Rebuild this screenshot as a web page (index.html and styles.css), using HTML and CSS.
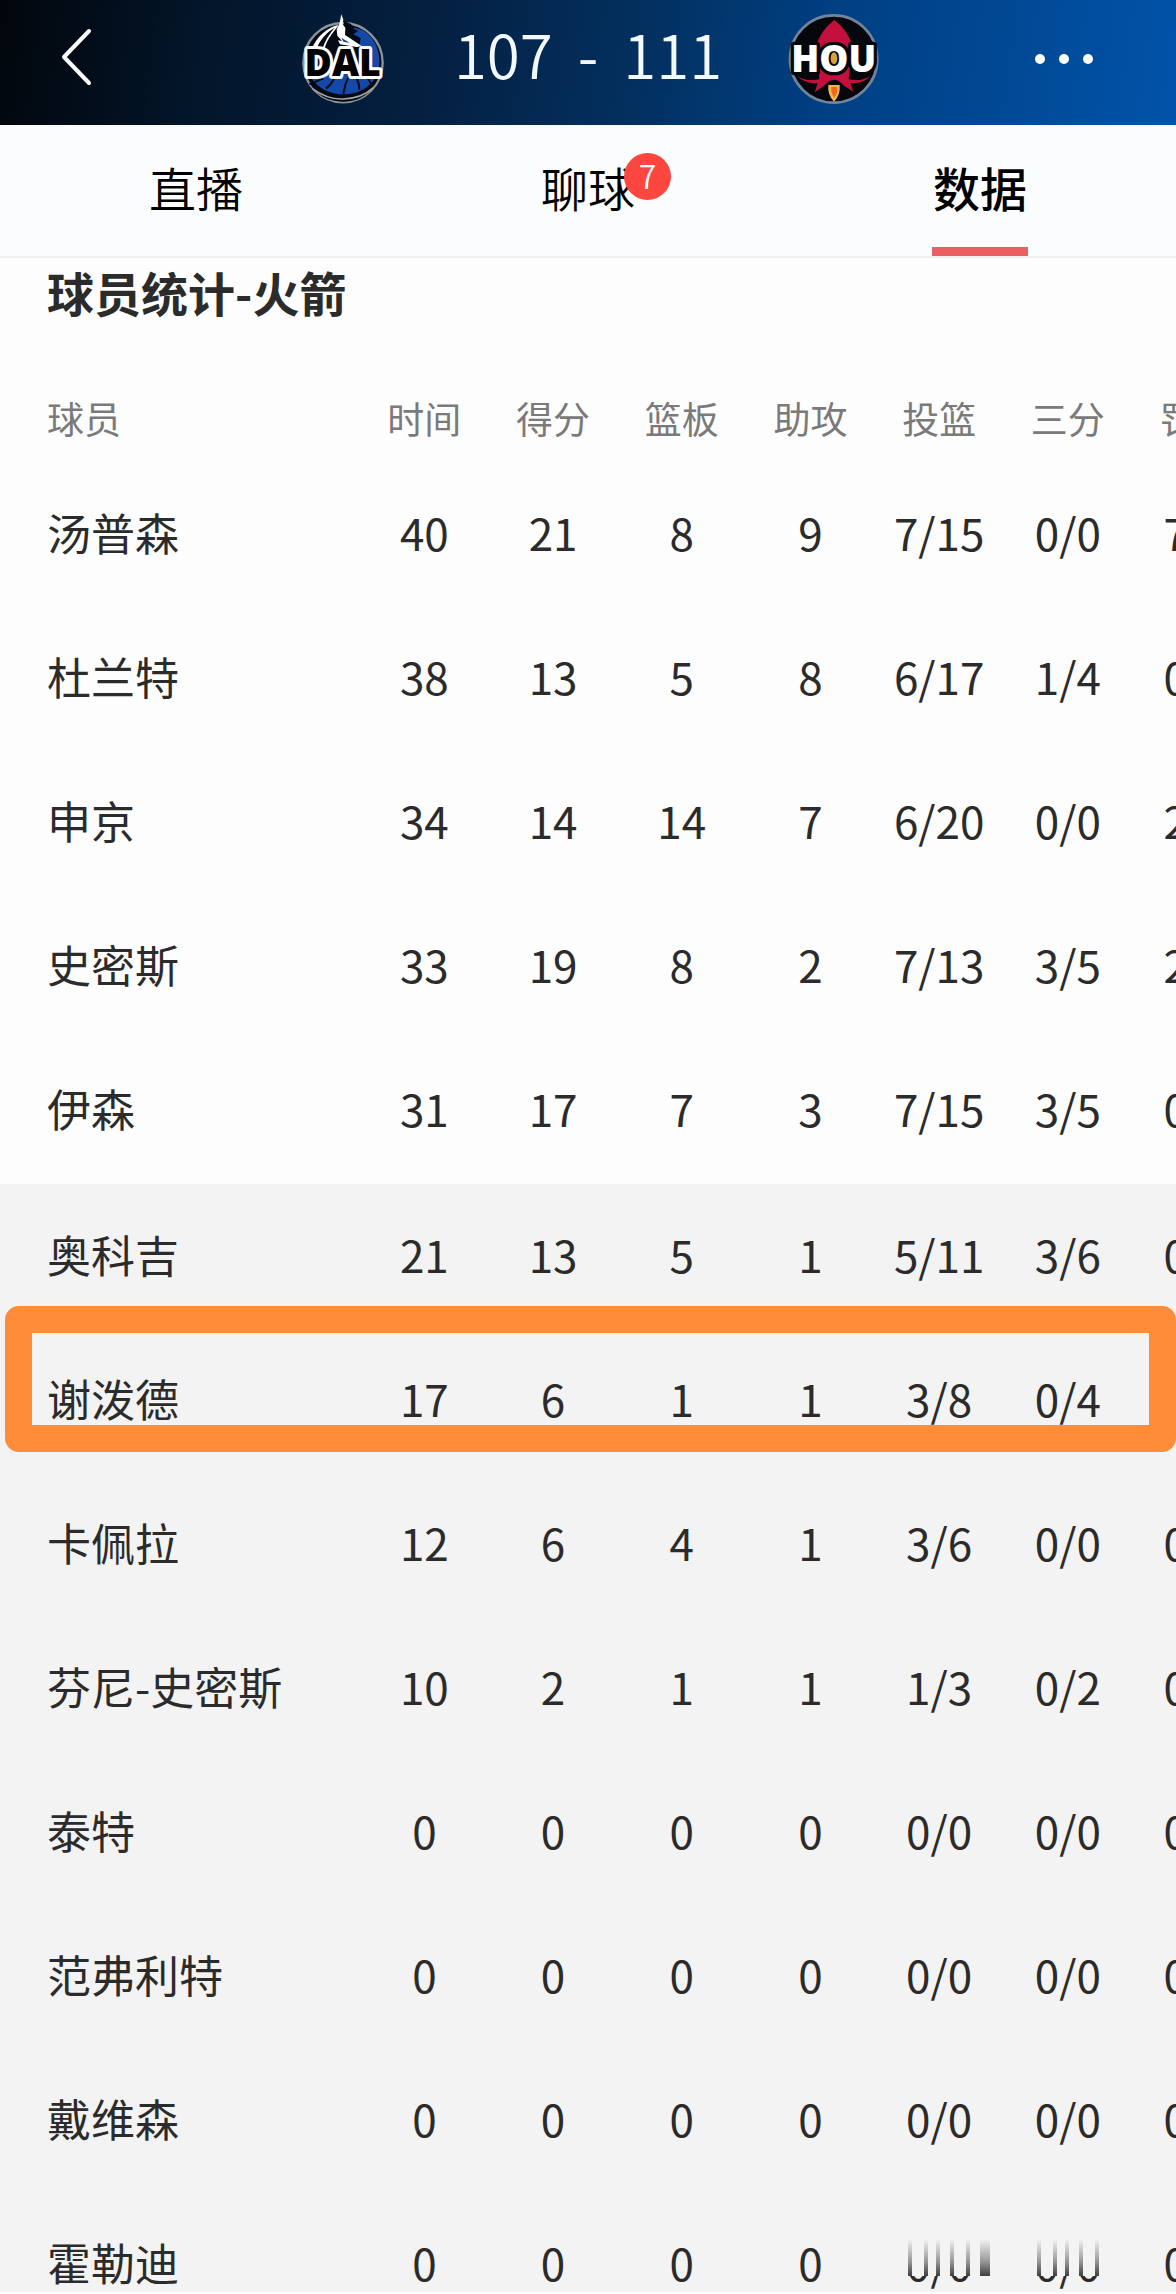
FILE: index.html
```html
<!DOCTYPE html>
<html lang="zh-CN">
<head>
  <meta charset="utf-8">
  <meta name="viewport" content="width=device-width, initial-scale=1">
  <title>球员统计</title>
  <link rel="stylesheet" href="styles.css">
</head>
<body>
  <header class="topbar">
    <button class="icon-btn back" type="button" aria-label="返回">
      <svg width="33" height="60" viewBox="0 0 33 60" fill="none" stroke="#fff" stroke-width="4" stroke-linecap="round" stroke-linejoin="round"><path d="M29 4 L4 30 L29 56"/></svg>
    </button>
    <div class="match">
      <svg class="logo" viewBox="0 0 330 330" role="img" aria-label="DAL">
        <circle cx="159" cy="173" r="119" fill="#050a14" stroke="#8b9299" stroke-width="7"/>
        <path d="M160 70 C225 55 270 110 268 170 C268 225 225 268 158 268 C110 268 72 240 58 208 L215 208 L215 125 Z" fill="#1449a8"/>
        <path d="M66 130 C80 96 112 66 146 60 C128 84 112 102 104 130 Z" fill="#fff"/>
        <path d="M82 126 C92 102 112 80 134 68 C116 90 104 108 98 130 Z" fill="#050a14"/>
        <path d="M118 126 C124 98 132 82 145 72 C138 94 142 116 162 128 Z" fill="#050a14"/>
        <path d="M160 48 C175 52 190 58 192 72 L204 78 L190 88 L212 100 L208 122 L170 92 Z" fill="#050a14"/>
        <path d="M154 28 L160 44 L158 58 L166 68 L165 90 L180 100 L216 124 L200 126 L150 118 L144 106 L156 108 L142 92 L140 72 L148 58 Z" fill="#fff"/>
        <path d="M154 98 L180 114 L160 110 Z" fill="#1449a8"/>
        <path d="M58 238 L100 220 M108 250 Q126 238 134 214 M160 266 Q164 238 176 214 M208 254 Q208 234 196 212 M244 238 Q238 224 226 212" fill="none" stroke="#050a14" stroke-width="6"/>
        <path d="M58 232 Q108 282 168 276 Q232 270 260 226 Q232 290 160 290 Q88 290 58 232 Z" fill="#050a14"/>
        <path d="M66 250 Q112 284 160 282 Q216 280 250 248" fill="none" stroke="#a5a49f" stroke-width="5"/>
        <text class="dal-text" x="158" y="213" text-anchor="middle">DAL</text>
      </svg>
      <div class="score">
        <span>107</span>
        <span>-</span>
        <span>111</span>
      </div>
      <svg class="logo" viewBox="0 0 330 330" role="img" aria-label="HOU">
        <circle cx="173" cy="162" r="131" fill="#06070c" stroke="#73839a" stroke-width="8"/>
        <path d="M175 45 Q216 76 230 124 L218 220 L232 260 L204 242 Q175 206 144 242 L116 262 L130 220 L120 124 Q134 76 175 45 Z" fill="#c4103c"/>
        <path d="M62 212 Q90 232 134 222 L128 234 Q88 238 62 212 Z M284 212 Q256 232 214 222 L220 234 Q262 238 284 212 Z" fill="#c4103c"/>
        <path d="M152 238 Q174 218 196 238 L190 242 L158 242 Z" fill="#06070c"/>
        <path d="M157 240 L191 240 Q194 270 174 290 Q154 270 157 240 Z" fill="#f3b64d"/>
        <path d="M166 246 L183 246 Q186 264 175 278 Q164 264 166 246 Z" fill="#ee681d"/>
        <text class="hou-text" x="173" y="200" text-anchor="middle">HOU</text>
        <ellipse cx="174" cy="160" rx="10" ry="18" fill="#d9a13c"/>
      </svg>
    </div>
    <button class="icon-btn more" type="button" aria-label="更多">
      <svg width="60" height="12" viewBox="0 0 60 12" fill="#fff"><circle cx="6" cy="6" r="5"/><circle cx="30" cy="6" r="5"/><circle cx="54" cy="6" r="5"/></svg>
    </button>
  </header>

  <nav class="tabs">
    <a href="#live">直播</a>
    <a href="#chat"><span class="tab-label">聊球<span class="badge">7</span></span></a>
    <a href="#stats" class="active">数据</a>
  </nav>

  <main class="stats" id="stats">
    <h1>球员统计-火箭</h1>
    <table>
      <thead>
        <tr><th class="name" scope="col">球员</th><th scope="col">时间</th><th scope="col">得分</th><th scope="col">篮板</th><th scope="col">助攻</th><th scope="col">投篮</th><th scope="col">三分</th><th scope="col">罚球</th></tr>
      </thead>
      <tbody class="starters">
        <tr><th class="name" scope="row">汤普森</th><td>40</td><td>21</td><td>8</td><td>9</td><td>7/15</td><td>0/0</td><td>7/8</td></tr>
        <tr><th class="name" scope="row">杜兰特</th><td>38</td><td>13</td><td>5</td><td>8</td><td>6/17</td><td>1/4</td><td>0/0</td></tr>
        <tr><th class="name" scope="row">申京</th><td>34</td><td>14</td><td>14</td><td>7</td><td>6/20</td><td>0/0</td><td>2/2</td></tr>
        <tr><th class="name" scope="row">史密斯</th><td>33</td><td>19</td><td>8</td><td>2</td><td>7/13</td><td>3/5</td><td>2/2</td></tr>
        <tr><th class="name" scope="row">伊森</th><td>31</td><td>17</td><td>7</td><td>3</td><td>7/15</td><td>3/5</td><td>0/0</td></tr>
      </tbody>
      <tbody class="bench">
        <tr><th class="name" scope="row">奥科吉</th><td>21</td><td>13</td><td>5</td><td>1</td><td>5/11</td><td>3/6</td><td>0/0</td></tr>
        <tr><th class="name" scope="row">谢泼德<span class="marker"></span></th><td>17</td><td>6</td><td>1</td><td>1</td><td>3/8</td><td>0/4</td><td></td></tr>
        <tr><th class="name" scope="row">卡佩拉</th><td>12</td><td>6</td><td>4</td><td>1</td><td>3/6</td><td>0/0</td><td>0/0</td></tr>
        <tr><th class="name" scope="row">芬尼-史密斯</th><td>10</td><td>2</td><td>1</td><td>1</td><td>1/3</td><td>0/2</td><td>0/0</td></tr>
        <tr><th class="name" scope="row">泰特</th><td>0</td><td>0</td><td>0</td><td>0</td><td>0/0</td><td>0/0</td><td>0/0</td></tr>
        <tr><th class="name" scope="row">范弗利特</th><td>0</td><td>0</td><td>0</td><td>0</td><td>0/0</td><td>0/0</td><td>0/0</td></tr>
        <tr><th class="name" scope="row">戴维森</th><td>0</td><td>0</td><td>0</td><td>0</td><td>0/0</td><td>0/0</td><td>0/0</td></tr>
        <tr>
          <th class="name" scope="row">霍勒迪</th><td>0</td><td>0</td><td>0</td><td>0</td>
          <td class="faded">0/0
            <svg class="smear" width="258" height="37" viewBox="0 0 258 37" aria-hidden="true">
              <defs>
                <linearGradient id="streak" x1="0" y1="0" x2="0" y2="1"><stop offset="0" stop-color="#2b2b2b" stop-opacity="0"/><stop offset="0.6" stop-color="#2b2b2b" stop-opacity="0.45"/><stop offset="1" stop-color="#2b2b2b" stop-opacity="0.9"/></linearGradient>
              </defs>
              <rect width="258" height="37" fill="#f3f3f3"/>
              <g fill="url(#streak)">
                <rect x="33" y="0" width="4" height="37"/><rect x="49" y="0" width="4" height="37"/>
                <rect x="61" y="0" width="4" height="37"/>
                <rect x="75" y="0" width="4" height="37"/><rect x="91" y="0" width="4" height="37"/>
                <rect x="105" y="0" width="10" height="37"/>
                <rect x="162" y="0" width="4" height="37"/><rect x="178" y="0" width="4" height="37"/>
                <rect x="190" y="0" width="4" height="37"/>
                <rect x="204" y="0" width="4" height="37"/><rect x="220" y="0" width="4" height="37"/>
              </g>
            </svg>
          </td>
          <td>0/0</td><td>0/0</td>
        </tr>
      </tbody>
    </table>
  </main>
</body>
</html>
```
FILE: styles.css
```css
* {
  box-sizing: border-box;
}
body {
  display: flex;
  flex-direction: column;
  height: 100vh;
  margin: 0;
  padding-bottom: 2px;
  overflow: hidden;
  background-color: #fdfdfd;
  color: #2b2b2b;
  font-family: "Noto Sans CJK SC", sans-serif;
}

/* top bar */
.topbar {
  display: grid;
  grid-template-columns: 1fr auto 1fr;
  align-items: center;
  flex: none;
  height: 125px;
  padding: 0 60px;
  background: linear-gradient(98deg, #02060c 0%, #03162b 18%, #041f40 36%, #03305f 54%, #003f82 70%, #014893 84%, #0153aa 100%);
}
.icon-btn {
  display: flex;
  padding: 0;
  border: 0;
  background: none;
  cursor: pointer;
}
.back {
  justify-self: start;
  padding-bottom: 12px;
}
.more {
  justify-self: end;
  padding: 0 22px 8px 0;
}
.match {
  display: flex;
  align-items: center;
  gap: 54px;
  padding-bottom: 6px;
}
.logo {
  display: block;
  width: 110px;
  height: 110px;
}
.score {
  display: flex;
  gap: 25px;
  padding-bottom: 14px;
  color: #f4f9ff;
  font-size: 60px;
  font-weight: 350;
  line-height: 80px;
}
.dal-text,
.hou-text {
  font-family: "Open Sans", sans-serif;
  font-weight: 800;
  paint-order: stroke;
  stroke-linejoin: round;
}
.dal-text {
  font-size: 112px;
  fill: #000;
  stroke: #fff;
  stroke-width: 18px;
}
.hou-text {
  font-size: 110px;
  fill: #fff;
  stroke: #06070c;
  stroke-width: 20px;
}

/* tabs */
.tabs {
  display: flex;
  flex: none;
  height: 133px;
  border-bottom: 2px solid #f0f0f1;
  background-color: #fbfcfd;
}
.tabs a {
  display: flex;
  flex: 1;
  justify-content: center;
  color: #000;
  font-size: 47px;
  font-weight: 350;
  line-height: 124px;
  text-decoration: none;
}
.tabs .active {
  position: relative;
  font-weight: 500;
}
.tabs .active::after {
  content: "";
  position: absolute;
  bottom: 0;
  width: 96px;
  height: 9px;
  background-color: #ea5f61;
}
.tab-label {
  position: relative;
}
.badge {
  position: absolute;
  top: 28px;
  right: -36px;
  width: 47px;
  height: 47px;
  border-radius: 50%;
  background-color: #fc463f;
  color: #fff;
  font-size: 32px;
  line-height: 44px;
  text-align: center;
}

/* player table */
.stats {
  flex: 1;
  min-height: 0;
  overflow: hidden;
}
.stats h1 {
  margin: 0;
  padding: 0 0 4px 47px;
  font-size: 47px;
  font-weight: 700;
  line-height: 68px;
}
table {
  width: 1261px;
  table-layout: fixed;
  border-collapse: separate;
  border-spacing: 0;
}
th,
td {
  height: 144px;
  padding: 0 0 4px;
  font-size: 44px;
  font-weight: 400;
  line-height: 64px;
  text-align: center;
}
.name {
  width: 360px;
  padding-left: 47px;
  text-align: left;
}
thead th {
  height: 132px;
  padding-top: 56px;
  padding-bottom: 12px;
  color: #7a7a7a;
  font-size: 37px;
}
.starters tr:last-child > * {
  height: 146px;
  padding-bottom: 6px;
}
.bench {
  background-color: #f3f3f3;
}
.bench .name {
  position: relative;
}
.marker {
  position: absolute;
  top: -22px;
  left: 5px;
  width: calc(100vw - 5px);
  height: 146px;
  border: 27px solid #ff8c39;
  border-radius: 14px;
}
.faded {
  position: relative;
}
.smear {
  position: absolute;
  top: 47px;
  left: 0;
}
```
